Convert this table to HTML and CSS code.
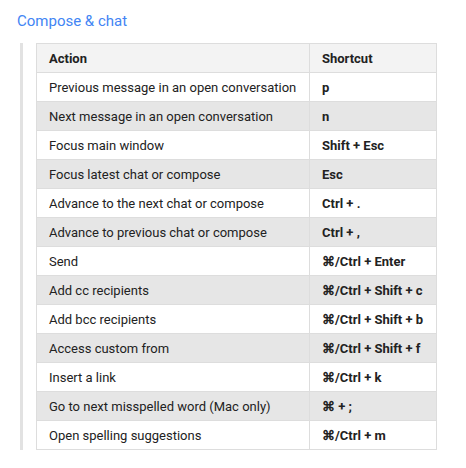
FILE: index.html
```html
<!DOCTYPE html>
<html>
<head>
<meta charset="utf-8">
<link rel="stylesheet" href="styles.css">
</head>
<body>
<h2 class="title">Compose &amp; chat</h2>
<div class="quote">
  <table class="keys">
    <thead>
      <tr><th>Action</th><th>Shortcut</th></tr>
    </thead>
    <tbody>
      <tr><td>Previous message in an open conversation</td><td class="k">p</td></tr>
      <tr><td>Next message in an open conversation</td><td class="k">n</td></tr>
      <tr><td>Focus main window</td><td class="k">Shift + Esc</td></tr>
      <tr><td>Focus latest chat or compose</td><td class="k">Esc</td></tr>
      <tr><td>Advance to the next chat or compose</td><td class="k">Ctrl + .</td></tr>
      <tr><td>Advance to previous chat or compose</td><td class="k">Ctrl + ,</td></tr>
      <tr><td>Send</td><td class="k">⌘/Ctrl + Enter</td></tr>
      <tr><td>Add cc recipients</td><td class="k">⌘/Ctrl + Shift + c</td></tr>
      <tr><td>Add bcc recipients</td><td class="k">⌘/Ctrl + Shift + b</td></tr>
      <tr><td>Access custom from</td><td class="k">⌘/Ctrl + Shift + f</td></tr>
      <tr><td>Insert a link</td><td class="k">⌘/Ctrl + k</td></tr>
      <tr><td>Go to next misspelled word (Mac only)</td><td class="k">⌘ + ;</td></tr>
      <tr><td>Open spelling suggestions</td><td class="k">⌘/Ctrl + m</td></tr>
    </tbody>
  </table>
</div>
</body>
</html>
```
FILE: styles.css
```css
html, body {
  margin: 0;
  padding: 0;
  background: #fff;
}
body {
  font-family: Roboto, "Liberation Sans", sans-serif;
  color: #222;
}
.title {
  margin: 0;
  padding: 11px 0 0 17px;
  font-size: 15px;
  line-height: 20px;
  font-weight: 400;
  color: #4285f4;
}
.quote {
  margin: 12px 0 0 20px;
  padding-left: 13px;
  border-left: 3px solid #e2e2e2;
  width: 403px;
}
.keys {
  border-collapse: collapse;
  width: 401px;
  font-size: 13px;
}
.keys th, .keys td {
  border: 1px solid #ddd;
  height: 28px;
  padding: 0 12px;
  text-align: left;
  vertical-align: middle;
}
.keys th {
  background: #f3f3f3;
  font-weight: 700;
}
.keys th:first-child, .keys td:first-child {
  width: 248px;
}
.keys tbody tr:nth-child(even) td {
  background: #e6e6e6;
}
.keys td.k {
  font-weight: 700;
}
```
